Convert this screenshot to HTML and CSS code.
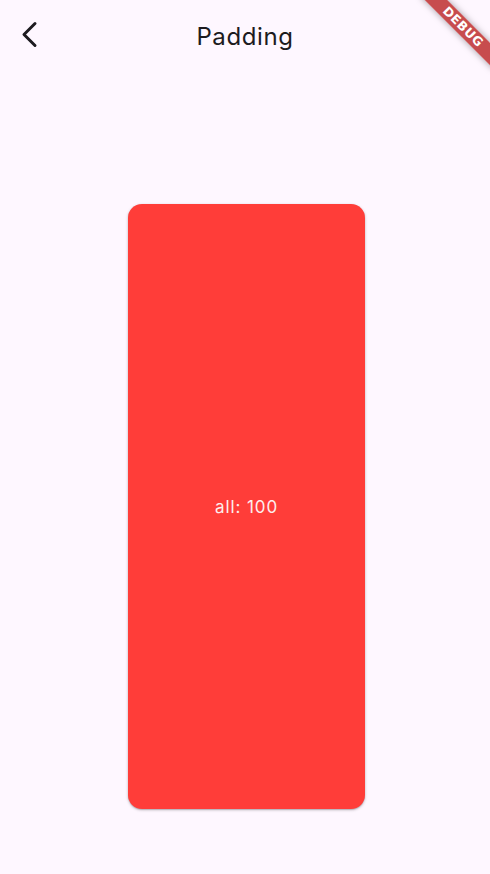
FILE: index.html
```html
<!DOCTYPE html>
<html>
<head>
<meta charset="utf-8">
<link rel="stylesheet" href="styles.css">
</head>
<body>
<div class="app">
  <header class="appbar">
    <button class="back" aria-label="Back">
      <svg width="24" height="30" viewBox="0 0 24 30"><polyline points="15,3.5 4,14.5 15,25.5" fill="none" stroke="#1d1b20" stroke-width="3" stroke-linecap="round" stroke-linejoin="round"/></svg>
    </button>
    <h1 class="title">Padding</h1>
  </header>
  <main class="content">
    <div class="card"><span class="label">all: 100</span></div>
  </main>
  <div class="banner">DEBUG</div>
</div>
</body>
</html>
```
FILE: styles.css
```css
html, body { margin: 0; padding: 0; }
body { background: #fef7ff; font-family: Inter, Roboto, "Noto Sans", sans-serif; }
.app { width: 490px; height: 874px; display: flex; flex-direction: column; position: relative; overflow: hidden; }
.appbar { height: 72px; display: flex; align-items: center; justify-content: center; position: relative; flex: none; }
.back { position: absolute; left: 20px; top: 20px; width: 24px; height: 30px; padding: 0; border: 0; background: none; display: flex; }
.title { margin: 0; font-weight: 400; font-size: 24px; color: #1d1b20; letter-spacing: 0.6px; }
.content { flex: 1; padding: 132px 125px 65px 128px; display: flex; }
.card { flex: 1; background: #ff3d39; border-radius: 14px; box-shadow: 0 1px 3px rgba(0,0,0,0.25), 0 1px 1px rgba(0,0,0,0.12); display: flex; align-items: center; justify-content: center; }
.label { color: #fdeeee; font-size: 17px; letter-spacing: 0.9px; }
.banner { position: absolute; left: 411px; top: 19px; width: 104px; height: 16px; transform: rotate(45deg); background: rgba(183,28,28,0.78); box-shadow: 0 0 7px rgba(0,0,0,0.35); color: #fff; font-family: "DejaVu Sans", sans-serif; font-size: 12.5px; font-weight: 900; line-height: 16px; text-align: center; letter-spacing: 0.5px; }
```
